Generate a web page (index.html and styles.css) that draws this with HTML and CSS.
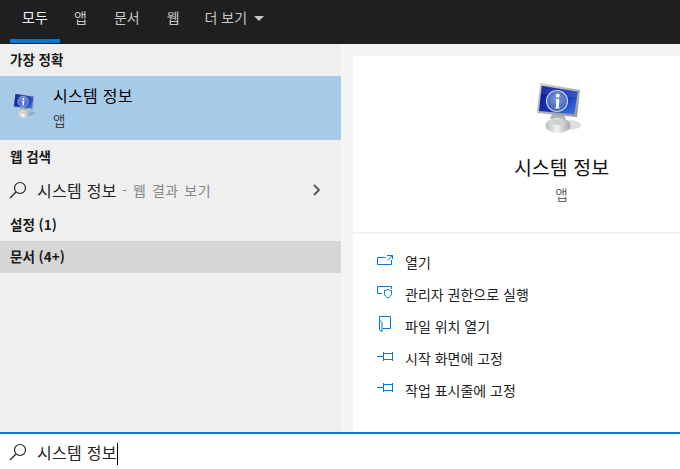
FILE: index.html
```html
<!DOCTYPE html>
<html lang="ko">
<head>
<meta charset="utf-8">
<title>시스템 정보</title>
<link rel="stylesheet" href="styles.css">
</head>
<body>
<svg class="defs" width="0" height="0" aria-hidden="true">
  <defs>
    <linearGradient id="screen" x1="0" y1="0" x2="1" y2="1">
      <stop offset="0" stop-color="#071490"/><stop offset="0.55" stop-color="#1a35b8"/><stop offset="1" stop-color="#3d80e6"/>
    </linearGradient>
    <linearGradient id="frame" x1="0" y1="0" x2="1" y2="1">
      <stop offset="0" stop-color="#cfd5da"/><stop offset="1" stop-color="#8d949b"/>
    </linearGradient>
    <linearGradient id="stand" x1="0" y1="0" x2="1" y2="0">
      <stop offset="0" stop-color="#b8bcbe"/><stop offset="0.45" stop-color="#f2f2f2"/><stop offset="1" stop-color="#a4a8aa"/>
    </linearGradient>
    <radialGradient id="badge" cx="0.5" cy="0.4" r="0.6">
      <stop offset="0" stop-color="#7f9bd6"/><stop offset="1" stop-color="#3d5cb8"/>
    </radialGradient>
    <symbol id="monitor" viewBox="0 0 48 52">
      <ellipse cx="33" cy="43" rx="13" ry="5" fill="#000" opacity=".13"/>
      <path d="M17 32h12l2 6-16-1z" fill="#aeb2b5"/>
      <ellipse cx="23" cy="43.500" rx="12.500" ry="7.500" fill="url(#stand)"/>
      <ellipse cx="23" cy="40" rx="7" ry="3" fill="#cfd2d4"/>
      <path d="M5 1L45 8 42 35 2 31z" fill="url(#frame)"/>
      <path d="M6.700 3.700L42.700 9.700 39.300 32.300 4 29z" fill="url(#screen)"/>
      <path d="M6.700 3.700L42.700 9.700 41.800 15 5.700 12z" fill="#fff" opacity=".1"/>
      <circle cx="22" cy="19" r="10.500" fill="url(#badge)" stroke="#c5d1e8" stroke-width="1.200"/>
      <circle cx="22.800" cy="13.500" r="1.900" fill="#fff"/>
      <path d="M20.300 17.300h4l-.6 7.500c0 .8.500 1 1.200 1v.8h-5.200v-.8c.8 0 1.100-.3 1.200-1l.4-6.300c0-.5-.4-.7-1-.7z" fill="#fff"/>
    </symbol>
    <symbol id="search" viewBox="0 0 18 18">
      <circle cx="11" cy="7" r="5.500" fill="none" stroke="currentColor" stroke-width="1.200"/>
      <path d="M7 11L1 17" fill="none" stroke="currentColor" stroke-width="1.200"/>
    </symbol>
    <symbol id="pin" viewBox="0 0 16 9">
      <path d="M0 4.500H6.500M6.500 0V9M6.500 1.500H15.500M6.500 7.500H15.500M15.500 0V9" fill="none" stroke="#0078d7"/>
    </symbol>
  </defs>
</svg>
<div class="app">
  <nav class="tabs">
    <a class="tab active">모두</a>
    <a class="tab">앱</a>
    <a class="tab">문서</a>
    <a class="tab">웹</a>
    <a class="tab tab-more">더 보기<span class="caret"></span></a>
  </nav>
  <main class="content">
    <section class="results">
      <h2 class="head head-first">가장 정확</h2>
      <div class="best">
        <svg class="best-icon"><use href="#monitor"/></svg>
        <div class="best-text">
          <div class="best-title">시스템 정보</div>
          <div class="best-sub">앱</div>
        </div>
      </div>
      <h2 class="head head-web">웹 검색</h2>
      <div class="web-row">
        <svg class="search-icon"><use href="#search"/></svg>
        <span class="web-query">시스템 정보</span>
        <span class="web-hint">- 웹 결과 보기</span>
        <svg class="chevron" viewBox="0 0 8 12"><path d="M1 1l5 5-5 5" fill="none" stroke="#555" stroke-width="1.800"/></svg>
      </div>
      <h2 class="head head-set">설정 (1)</h2>
      <h2 class="head head-doc">문서 (4+)</h2>
    </section>
    <section class="detail">
      <div class="card">
        <div class="hero">
          <svg class="hero-icon"><use href="#monitor"/></svg>
          <div class="hero-title">시스템 정보</div>
          <div class="hero-sub">앱</div>
        </div>
        <ul class="actions">
          <li class="action">
            <span class="slot"><svg class="ic-open" viewBox="0 0 16 10"><path d="M8.500 2.500H0.500V9.500H14.500V5M10 0.500H15.500V4M15.500 0.500L10.500 5" fill="none" stroke="#0078d7"/></svg></span>
            열기
          </li>
          <li class="action">
            <span class="slot"><svg class="ic-shield" viewBox="0 0 16 13"><path d="M5 7.500H0.500V0.500H14.500V3" fill="none" stroke="#0078d7"/><path d="M7.500 4.500c1.300 0 2.400-.3 3.500-1 1.100.7 2.200 1 3.500 1v3c0 2-1.600 3.400-3.500 4.500-1.900-1.100-3.500-2.500-3.500-4.500z" fill="#fff" stroke="#0078d7"/></svg></span>
            관리자 권한으로 실행
          </li>
          <li class="action">
            <span class="slot"><svg class="ic-folder" viewBox="0 0 12 16"><path d="M0.500 0.500H11.500V12.500H3.500M0.500 0.500V14L3 15.500V6.500L0.500 4" fill="none" stroke="#0078d7"/></svg></span>
            파일 위치 열기
          </li>
          <li class="action">
            <span class="slot"><svg class="ic-pin"><use href="#pin"/></svg></span>
            시작 화면에 고정
          </li>
          <li class="action">
            <span class="slot"><svg class="ic-pin ic-pin-low"><use href="#pin"/></svg></span>
            작업 표시줄에 고정
          </li>
        </ul>
      </div>
    </section>
  </main>
  <footer class="searchbar">
    <svg class="search-icon"><use href="#search"/></svg>
    <span class="query">시스템 정보</span><span class="cursor"></span>
  </footer>
</div>
</body>
</html>
```
FILE: styles.css
```css
* { box-sizing: border-box; }
html, body { margin: 0; padding: 0; }
body {
  width: 680px;
  height: 469px;
  overflow: hidden;
  font-family: "Noto Sans CJK KR", "Noto Sans", sans-serif;
  color: #111;
  background: #fff;
}
.defs { display: block; height: 0; }
.app { display: flex; flex-direction: column; height: 469px; }

.tabs {
  display: flex;
  gap: 1px;
  height: 44px;
  flex: none;
  padding-left: 10px;
  background: #1f1f1f;
}
.tab {
  display: flex;
  align-items: center;
  justify-content: center;
  height: 43px;
  padding: 0 13px 9px;
  font-size: 14px;
  line-height: 18px;
  color: #c8c8c8;
}
.tab.active { width: 50px; padding: 0 0 5px; color: #f4f4f4; border-bottom: 4px solid #0078d7; }
.tab-more { margin-left: -2px; }
.caret {
  width: 0;
  height: 0;
  margin: 2px 0 0 7px;
  border-left: 5px solid transparent;
  border-right: 5px solid transparent;
  border-top: 5px solid #c8c8c8;
}

.content { display: flex; flex: 1; min-height: 0; }
.results { width: 341px; flex: none; background: #efefef; }
.head {
  margin: 0;
  padding-left: 10px;
  font-size: 13.500px;
  line-height: 18px;
  font-weight: 700;
  color: #1a1a1a;
}
.head-first { height: 32px; padding-top: 6px; }
.best {
  display: flex;
  height: 64px;
  background: #a6cbe9;
}
.best-icon { width: 24px; height: 26px; margin: 16px 0 0 12px; flex: none; }
.best-text { margin-left: 17px; padding-top: 8px; }
.best-title { font-size: 16px; line-height: 22px; letter-spacing: .3px; color: #000; }
.best-sub { margin-top: 4px; font-size: 13.500px; line-height: 20px; color: #444; }
.head-web { height: 33px; padding-top: 7px; }
.web-row { display: flex; align-items: center; height: 34px; padding-left: 9px; }
.search-icon { width: 18px; height: 18px; flex: none; color: #222; }
.web-query { margin-left: 10px; font-size: 16px; line-height: 22px; letter-spacing: .3px; color: #222; }
.web-hint { margin-left: 5px; font-size: 14px; line-height: 22px; letter-spacing: .6px; word-spacing: 1px; color: #888; }
.chevron { width: 8px; height: 12px; margin-left: auto; margin-right: 20px; }
.head-set { height: 34px; padding-top: 8px; }
.head-doc { height: 32px; padding-top: 6px; background: #d6d6d6; }

.detail { flex: 1; background: #f5f5f5; padding: 12px 0 0 12px; }
.card { height: 376px; background: #fff; }
.hero {
  display: flex;
  flex-direction: column;
  align-items: center;
  height: 178px;
  border-bottom: 2px solid #f2f2f2;
  padding: 26px 0 0 90px;
}
.hero-icon { width: 48px; height: 52px; margin-left: -5px; }
.hero-title { margin-top: 20px; font-size: 19.500px; line-height: 26px; color: #111; }
.hero-sub { margin-top: 5px; font-size: 13.500px; line-height: 18px; color: #666; }
.actions { list-style: none; margin: 12px 0 0; padding: 0 0 0 24px; }
.action {
  display: flex;
  align-items: center;
  gap: 12px;
  height: 32px;
  padding-bottom: 1px;
  font-size: 14px;
  color: #222;
}
.slot { display: flex; align-items: center; justify-content: center; width: 16px; height: 31px; flex: none; }
.ic-open { width: 16px; height: 10px; margin-bottom: 4px; }
.ic-shield { width: 16px; height: 13px; margin-bottom: 2px; }
.ic-folder { width: 12px; height: 16px; margin-bottom: 4px; }
.ic-pin { width: 16px; height: 9px; margin-bottom: 2px; }
.ic-pin-low { margin-bottom: 4px; }

.searchbar {
  display: flex;
  align-items: center;
  flex: none;
  height: 37px;
  border-top: 2px solid #0078d7;
  padding: 1px 0 0 9px;
  background: #fff;
}
.query { margin-left: 10px; font-size: 16px; line-height: 22px; letter-spacing: .3px; color: #222; }
.cursor { width: 1px; height: 22px; margin-top: 3px; background: #000; }
```
